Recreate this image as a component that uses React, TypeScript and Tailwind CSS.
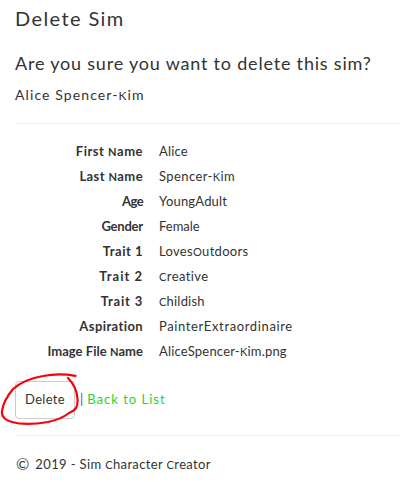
import React from "react";

function Hand({ children }: { children: string }) {
  return (
    <>
      {children.split(/([CKNO])/).map((part, i) =>
        /^[CKNO]$/.test(part) ? (
          <span key={i} className="text-[0.85em]">{part}</span>
        ) : (
          part
        ),
      )}
    </>
  );
}

const rows = [
  { label: "First Name", value: "Alice", lt: "tracking-[0.5px]", vt: "tracking-[0.2px]" },
  { label: "Last Name", value: "Spencer-Kim", lt: "tracking-[0.4px]", vt: "tracking-[0.4px]" },
  { label: "Age", value: "YoungAdult", lt: "tracking-[-0.6px]", vt: "tracking-[0.2px]" },
  { label: "Gender", value: "Female", lt: "tracking-[-0.2px]", vt: "tracking-[0px]" },
  { label: "Trait 1", value: "LovesOutdoors", lt: "tracking-[0.5px]", vt: "tracking-[0.3px]" },
  { label: "Trait 2", value: "Creative", lt: "tracking-[1px]", vt: "tracking-[0.4px]" },
  { label: "Trait 3", value: "Childish", lt: "tracking-[0.8px]", vt: "tracking-[0.2px]" },
  { label: "Aspiration", value: "PainterExtraordinaire", lt: "tracking-[0.4px]", vt: "tracking-[0.63px]" },
  { label: "Image File Name", value: "AliceSpencer-Kim.png", lt: "tracking-[0.03px]", vt: "tracking-[0.2px]" },
];

export default function App() {
  return (
    <div className="h-[482px] w-[400px] overflow-hidden whitespace-nowrap bg-white pl-[15px] font-['Lato',sans-serif] text-[13px] text-[#333]">
      <h2 className="mt-[4px] h-[28px] text-[20px] leading-[28px] tracking-[1.4px]">Delete Sim</h2>
      <h3 className="mt-[19px] h-[24px] text-[18px] leading-[24px] tracking-[0.8px]">
        Are you sure you want to delete this sim?
      </h3>
      <h4 className="mt-[10px] h-[20px] text-[14px] leading-[20px] tracking-[1.1px]">
        <Hand>Alice Spencer-Kim</Hand>
      </h4>
      <hr className="mt-[18px] border-[#eee]" />
      <dl className="mt-[15px] grid grid-cols-[128px_1fr] gap-x-[16px]">
        {rows.map((r) => (
          <React.Fragment key={r.label}>
            <dt className="h-[25px] text-right font-bold leading-[25px]">
              <span className={r.lt}><Hand>{r.label}</Hand></span>
            </dt>
            <dd className="h-[25px] leading-[25px]">
              <span className={r.vt}><Hand>{r.value}</Hand></span>
            </dd>
          </React.Fragment>
        ))}
      </dl>
      <div className="mt-[17px] flex h-[38px] items-center">
        <button className="relative h-[38px] w-[60px] rounded-[4px] border border-[#ccc] bg-white text-[13px] tracking-[0.3px]">
          Delete
          <svg className="pointer-events-none absolute left-[-16px] top-[-13px]" width="84" height="60" viewBox="0 369 84 60" fill="none" stroke="#f8000c" strokeWidth="2.2" strokeLinecap="round" strokeLinejoin="round">
            <path d="M75.5 375.8C65 374 53 374 43 376C31 378 20 383 13 389C8 395 3 404 2 411C1 417 5 420 12 422C22 425 36 424 48 422C58 420 64 417 69 413C76 410 78 407 77.5 399C77 390 74 384 68 378" />
          </svg>
        </button>
        <span className="ml-[5px] text-[#315caa]">|</span>
        <a className="ml-[4px] text-[#27d42f] tracking-[1px]">Back to List</a>
      </div>
      <hr className="mt-[16px] border-[#eee]" />
      <footer className="mt-[18px] flex h-[20px] items-center leading-[20px]">
        <span className="ml-px text-[16px]">©</span>
        <span className="ml-[6px] tracking-[0.37px]"><Hand>2019 - Sim Character Creator</Hand></span>
      </footer>
    </div>
  );
}
